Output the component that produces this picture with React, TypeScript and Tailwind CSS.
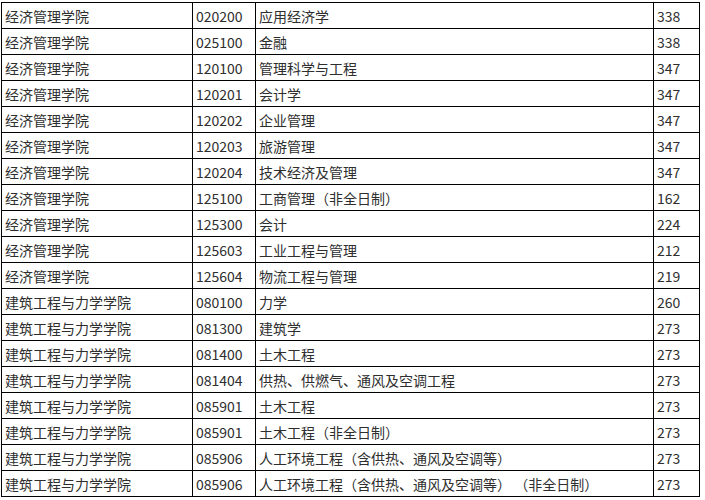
const rows: [string, string, string, string][] = [
  ["经济管理学院", "020200", "应用经济学", "338"],
  ["经济管理学院", "025100", "金融", "338"],
  ["经济管理学院", "120100", "管理科学与工程", "347"],
  ["经济管理学院", "120201", "会计学", "347"],
  ["经济管理学院", "120202", "企业管理", "347"],
  ["经济管理学院", "120203", "旅游管理", "347"],
  ["经济管理学院", "120204", "技术经济及管理", "347"],
  ["经济管理学院", "125100", "工商管理（非全日制）", "162"],
  ["经济管理学院", "125300", "会计", "224"],
  ["经济管理学院", "125603", "工业工程与管理", "212"],
  ["经济管理学院", "125604", "物流工程与管理", "219"],
  ["建筑工程与力学学院", "080100", "力学", "260"],
  ["建筑工程与力学学院", "081300", "建筑学", "273"],
  ["建筑工程与力学学院", "081400", "土木工程", "273"],
  ["建筑工程与力学学院", "081404", "供热、供燃气、通风及空调工程", "273"],
  ["建筑工程与力学学院", "085901", "土木工程", "273"],
  ["建筑工程与力学学院", "085901", "土木工程（非全日制）", "273"],
  ["建筑工程与力学学院", "085906", "人工环境工程（含供热、通风及空调等）", "273"],
  ["建筑工程与力学学院", "085906", "人工环境工程（含供热、通风及空调等） （非全日制）", "273"],
]

export default function App() {
  return (
    <div
      className="bg-white w-[705px] h-[500px] overflow-hidden pt-[2px] pl-[1px] text-[14px] text-[#2e2e2e]"
      style={{ fontFamily: '"Microsoft YaHei", "Noto Sans CJK SC", sans-serif' }}
    >
      <div className="w-[699px] border-l border-t border-black">
        {rows.map((r, i) => (
          <div key={i} className="grid grid-cols-[191px_63px_398px_46px] h-[26px]">
            {r.map((c, j) => (
              <div
                key={j}
                className="border-r border-b border-black pl-[3px] flex items-center whitespace-pre overflow-hidden leading-none"
              >
                {c}
              </div>
            ))}
          </div>
        ))}
      </div>
    </div>
  )
}
